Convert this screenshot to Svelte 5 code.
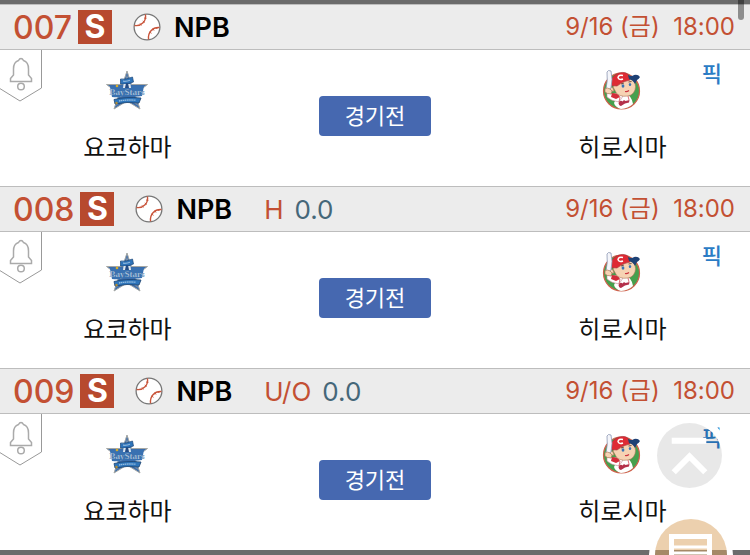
<script lang="ts">
    type Game = {
        no: string;
        kind: string;
        value: string;
    }

    const games: Game[] = [
        { no: "007", kind: "", value: "" },
        { no: "008", kind: "H", value: "0.0" },
        { no: "009", kind: "U/O", value: "0.0" },
    ]

    function toTop() {
        window.scrollTo({ top: 0, behavior: "smooth" })
    }
</script>

{#snippet ball()}
    <svg class="ball" viewBox="0 0 28 28" aria-hidden="true">
        <circle cx="14" cy="14" r="12.9" fill="#fff" stroke="#777" stroke-width="1.3" />
        <g fill="none" stroke="#c9553b">
            <path d="M12.4 1.5C13.6 8 8.5 13.5 1.6 12.5M26.4 14.5C19.5 14 14.5 19.5 15.6 26.4" stroke-width="1.4" />
            <path d="M11 5l2.400 .4M9.800 8l2 1.400M7 10.400l1.400 2M23.600 14l.3 2M19.700 15.500l1.300 2M16.500 19l2 1.300" stroke-width="1" />
        </g>
    </svg>
{/snippet}

{#snippet stars()}
    <svg class="logo" viewBox="0 0 42 40" role="img" aria-label="요코하마">
        <path d="M21 1l4.500 13.500h16l-12.500 9.500 5 15-13-8-13 8 5-15-12.500-9.500h16z" fill="#3b6dac" stroke="#a6a8a5" stroke-width="1" />
        <path d="M21 4l1.500 6h-3zM9.500 36l4-7 5 1zM32.500 36l-4-7-5 1z" fill="#8394a8" />
        <path d="M14.500 9q5 1 12-2l1 5q-6 3-13 2z" fill="#2e73b9" stroke="#1d4779" stroke-width=".7" />
        <path d="M17 11.200q4 .4 7-1" fill="none" stroke="#8eb6db" stroke-width="1.200" />
        <path d="M4 17q7-2 13 0 10-2 21-1l-2 10q-8 1-15 0-8 2-15 1z" fill="#3971b1" />
        <path d="M17.500 14h7l.5 4h-8z" fill="#dde6ee" />
        <path d="M20 13h2l1 5h-4z" fill="#244c85" />
        <text x="21" y="25" text-anchor="middle" font-size="9" fill="#b5cde3" stroke="#24568f" stroke-width=".2">BayStars</text>
        <path d="M8 29.500q12-3 27-1.500l-2 5q-12-1.500-24 1z" fill="#2d74ba" stroke="#1c426f" stroke-width=".8" />
        <path d="M13 31q8-1.500 17-.8" fill="none" stroke="#94bcdf" stroke-width="1.300" stroke-dasharray="1.400 .5" />
        <circle cx="11" cy="16" r="1.300" fill="#d6ac2c" />
        <circle cx="10.500" cy="33" r="1.200" fill="#b58e32" />
    </svg>
{/snippet}

{#snippet carp()}
    <svg class="logo" viewBox="0 0 42 40" role="img" aria-label="히로시마">
        <circle cx="20.500" cy="21" r="18" fill="#46a04d" stroke="#d0604c" stroke-width="1.200" />
        <path d="M16 27q3-4 8-4 7 3 8 11-5 4.500-12 5-6-2-7-6z" fill="#fff" />
        <path d="M6 23l5 1 7-1 4 3-4 6q-8-1-12-5z" fill="#fff" stroke="#c08690" stroke-width=".6" />
        <path d="M11 23l6 1 2 3-4 2-5-2z" fill="#d32d3a" />
        <path d="M12 17q1-4 6-5l11-3q4 0 5 4 2 8-4 12-8 3-14-1z" fill="#f6d3b3" stroke="#ad7356" stroke-width=".6" />
        <path d="M8 17Q9 6 18 3q8-2 10 3l1 4q-7 1-13 6-5-1-8 1z" fill="#de2a34" stroke="#a0333c" stroke-width=".6" />
        <path d="M27 5q4 2 6 0 4-1 6 2-1 2-3 3l-2 4q-2-4-6-5z" fill="#1e4175" />
        <path d="M22 5.500q-4.500-1-5 2 1 3 5 1.500" fill="none" stroke="#fff" stroke-width="1.500" />
        <path d="M12 18q-3-2-3 1 1 3 4 2z" fill="#f6d3b3" stroke="#ad7356" stroke-width=".6" />
        <ellipse cx="22" cy="16" rx="1.400" ry="1.700" fill="#3975b5" />
        <ellipse cx="29" cy="14.500" rx="1.200" ry="1.600" fill="#3975b5" />
        <path d="M20 14l3-1M27.500 12l3-.5" stroke="#513128" stroke-width=".8" />
        <path d="M24 21.500q2 .5 4-1" fill="none" stroke="#cc3540" stroke-width="1.200" />
        <path d="M6 2q1-2.500 4-1 2 8 0 17l-3 2-2-1q2-9 1-17z" fill="#f4f5fa" stroke="#8c97b3" stroke-width=".8" />
        <path d="M4 19q2-2 5 0l2 2-1 3q-4 0-6-2z" fill="#f6d3b3" stroke="#ad7356" stroke-width=".6" />
        <path d="M19 27l-1 5M27 26l1 4" stroke="#d33740" stroke-width=".7" />
        <path d="M17.500 33q2-3.500 4-1.500 1.500-2 3-.5l4-1-.5 2.500-4 1-4 2.500q-2 0-2.500-3z" fill="#b4304a" />
    </svg>
{/snippet}

<main>
    {#each games as game}
        <section>
            <header>
                <span class="no">{game.no}</span>
                <strong class="badge">S</strong>
                {@render ball()}
                <span class="league">NPB</span>
                {#if game.kind}
                    <span class="kind">{game.kind}</span>
                    <span class="value">{game.value}</span>
                {/if}
                <time>9/16 (금)&nbsp; 18:00</time>
            </header>
            <div class="match">
                <button class="alarm" aria-label="알림">
                    <svg viewBox="0 0 43 53">
                        <path d="M41.500 0v38L20 51 -1 38" fill="#fff" stroke="#999" />
                        <path d="M10.500 31.500v-3l3-3.500v-6q0-7 5-8.500 1-2 2.500-2t2.500 2q5 1.500 5 8.500v6l3 3.500v3z" fill="none" stroke="#aaa" stroke-width="1.500" />
                        <circle cx="21" cy="36.500" r="3.300" fill="none" stroke="#aaa" stroke-width="1.500" />
                    </svg>
                </button>
                <div class="team">
                    {@render stars()}
                    <span>요코하마</span>
                </div>
                <button class="status">경기전</button>
                <div class="team">
                    {@render carp()}
                    <span>히로시마</span>
                </div>
                <a class="pick" href="#pick">픽</a>
            </div>
        </section>
    {/each}
</main>

<button class="float top" aria-label="맨 위로" onclick={toTop}>
    <svg viewBox="0 0 66 66">
        <path d="M15 18h35M17 50l16-16 16 16" fill="none" stroke="#fff" stroke-width="6" />
    </svg>
</button>
<button class="float cart" aria-label="구매 목록">
    <svg viewBox="0 0 72 72">
        <path d="M14 15h43v42H14zM19 20v32h33V20z" fill="#fff" fill-rule="evenodd" />
        <path d="M19 28h33M19 34h33" stroke="#fff" stroke-width="3" />
    </svg>
</button>
<div class="thumb"></div>

<style>
    :global(body) {
        background: #fff;
        font-family: Inter, "Noto Sans CJK KR", sans-serif;
    }
    main {
        border-top: 4px solid #6b6b6b;
        border-bottom: 5px solid #6b6b6b;
    }
    button {
        border: 0;
        padding: 0;
        font: inherit;
        cursor: pointer;
    }
    header {
        display: flex;
        align-items: center;
        box-sizing: border-box;
        height: 46px;
        padding: 0 15px 0 13px;
        background: #ececec;
        border-top: 1px solid #bdbdbd;
        border-bottom: 1px solid #bdbdbd;
        white-space: nowrap;
    }
    .no {
        color: #c35033;
        font-size: 32px;
        font-weight: 500;
    }
    .badge {
        width: 34px;
        margin-left: 6px;
        background: #b7492e;
        color: #fff;
        font-size: 32px;
        line-height: 34px;
        text-align: center;
    }
    .ball {
        width: 28px;
        height: 28px;
        margin: 0 13px 0 21px;
    }
    .league {
        color: #000;
        font-size: 27px;
        font-weight: 600;
    }
    .kind {
        margin: 0 11px 0 32px;
        color: #c35033;
        font-size: 26px;
        font-weight: 400;
    }
    .value {
        color: #456779;
        font-size: 26px;
        font-weight: 400;
    }
    time {
        margin-left: auto;
        color: #c35033;
        font-size: 24px;
        line-height: 24px;
    }
    .match {
        position: relative;
        display: grid;
        grid-template-columns: 34% 1fr 34%;
        align-items: center;
        justify-items: center;
        height: 136px;
    }
    .alarm {
        position: absolute;
        top: 0;
        left: 0;
        width: 43px;
        height: 53px;
        background: none;
    }
    .alarm svg, .float svg {
        display: block;
        width: 100%;
        height: 100%;
    }
    .team {
        display: flex;
        flex-direction: column;
        align-items: center;
        gap: 20px;
        color: #111;
        font-size: 24px;
        line-height: 36px;
    }
    .logo {
        width: 42px;
        height: 40px;
        font-family: "Liberation Serif", serif;
        font-weight: bold;
    }
    .status {
        width: 112px;
        height: 40px;
        margin-bottom: 4px;
        padding-bottom: 4px;
        border-radius: 4px;
        background: #4668b0;
        color: #fff;
        font-size: 22px;
    }
    .pick {
        position: absolute;
        top: 8px;
        right: 28px;
        color: #2b7cc5;
        font-size: 22px;
        font-weight: 500;
        line-height: 32px;
        text-decoration: none;
    }
    .float {
        position: fixed;
        border-radius: 50%;
    }
    .top {
        right: 28px;
        bottom: 67px;
        width: 65px;
        height: 65px;
        background: rgba(0, 0, 0, 0.09);
        box-shadow: 0 0 0 7px #fff;
    }
    .cart {
        right: 23px;
        bottom: -36px;
        width: 72px;
        height: 72px;
        background: rgba(218, 165, 99, 0.52);
        box-shadow: 0 0 0 6px #fff;
    }
    .thumb {
        position: fixed;
        top: 0;
        right: 6px;
        width: 6px;
        height: 20px;
        border-radius: 0 0 3px 3px;
        background: rgba(0, 0, 0, 0.4);
    }
</style>
